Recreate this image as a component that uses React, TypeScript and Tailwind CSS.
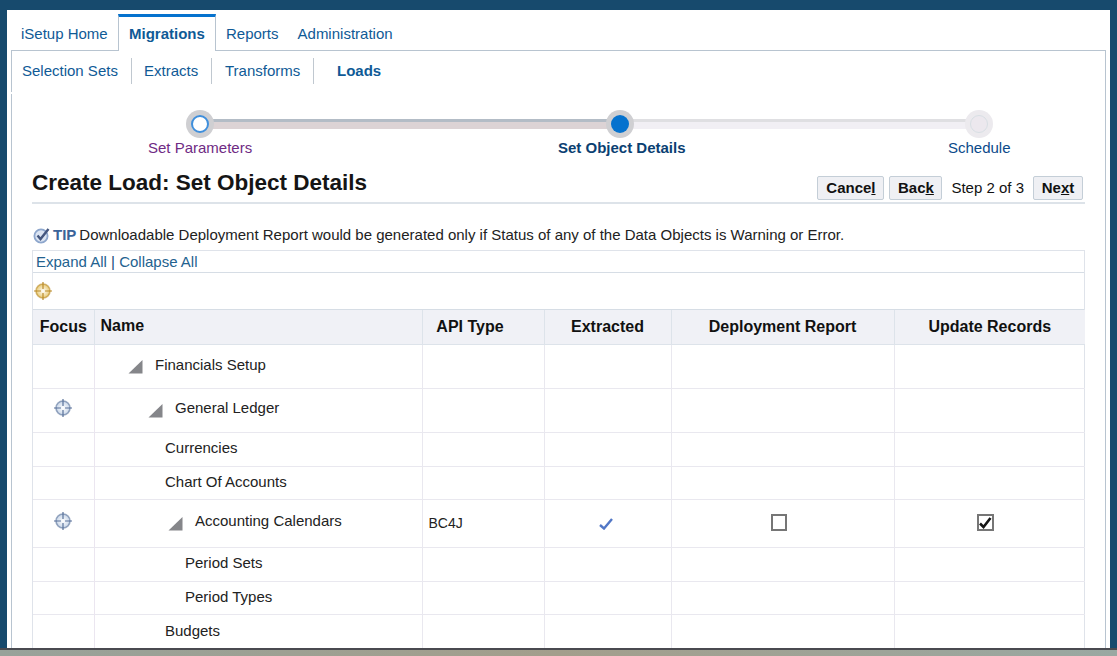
import React from 'react';

const Target = ({ color, line }: { color: string; line: string }) => (
  <svg width="20" height="20" viewBox="0 0 20 20">
    <defs>
      <radialGradient id={`t${color.slice(1)}`} cx="50%" cy="50%" r="55%">
        <stop offset="0%" stopColor="#ffffff" />
        <stop offset="100%" stopColor={color} />
      </radialGradient>
    </defs>
    <circle cx="10" cy="10" r="7" fill={`url(#t${color.slice(1)})`} stroke={line} strokeOpacity="0.6" strokeWidth="1.6" />
    <path d="M10 1v7M10 12v7M1 10h7M12 10h7" stroke={line} strokeWidth="1.2" />
  </svg>
);

const Arrow = () => (
  <svg width="15" height="15" viewBox="0 0 15 15" className="shrink-0">
    <path d="M14.5 1v13.5H0.5z" fill="#85868a" />
  </svg>
);

type Row = { name: string; indent: number; h: string; lift: string; arrow?: boolean; focus?: boolean; api?: string; check?: boolean };

const rows: Row[] = [
  { name: 'Financials Setup', indent: 33.5, h: 'h-[44px]', lift: 'mb-[1px]', arrow: true },
  { name: 'General Ledger', indent: 53.5, h: 'h-[44px]', lift: 'mb-[3px]', arrow: true, focus: true },
  { name: 'Currencies', indent: 70.5, h: 'h-[34px]', lift: 'mb-[1px]' },
  { name: 'Chart Of Accounts', indent: 70.5, h: 'h-[33px]', lift: 'mb-0' },
  { name: 'Accounting Calendars', indent: 73.5, h: 'h-[48px]', lift: 'mb-[4px]', arrow: true, focus: true, api: 'BC4J', check: true },
  { name: 'Period Sets', indent: 90.5, h: 'h-[34px]', lift: 'mb-[1px]' },
  { name: 'Period Types', indent: 90.5, h: 'h-[33px]', lift: 'mb-0' },
  { name: 'Budgets', indent: 70.5, h: 'h-[34px]', lift: 'mb-0' },
];

const Step = ({ dot }: { dot: 'ring' | 'fill' | 'off' }) => (
  <div
    className={`w-[28px] h-[28px] rounded-full flex items-center justify-center ${
      dot === 'off' ? 'bg-[#eceaee]' : 'bg-[#cfcfd2]'
    }`}
  >
    {dot === 'ring' && <div className="w-[18px] h-[18px] rounded-full bg-white border-2 border-[#3f8fdc]" />}
    {dot === 'fill' && <div className="w-[18px] h-[18px] rounded-full bg-[#0572ce]" />}
    {dot === 'off' && <div className="w-[18px] h-[18px] rounded-full bg-[#ece8ee] border border-[#d8dfe4]" />}
  </div>
);

const Btn = ({ pre, u, post, w }: { pre: string; u: string; post?: string; w: string }) => (
  <button className={`${w} h-[24px] rounded-[2px] border border-[#c4ced7] bg-[#eff0f4] text-[15px] font-bold text-[#111]`}>
    {pre}
    <span className="underline">{u}</span>
    {post}
  </button>
);

export default function App() {
  return (
    <div
      className="h-screen w-full flex flex-col overflow-hidden bg-[#174a6d] text-[#222]"
      style={{ fontFamily: '"Liberation Sans", Arial, sans-serif' }}
    >
      <div className="flex-1 min-h-0 mt-[10px] mx-[7px] bg-white overflow-hidden">
        {/* main tabs */}
        <div className="flex h-[41px] pt-[4px] pl-[4px] relative">
          <div className="absolute left-[4px] right-[4px] bottom-0 h-px bg-[#b8c4d0]" />
          <div className="w-[107px] pl-[10px] pt-[9px] text-[15px] text-[#0f5a96]">iSetup Home</div>
          <div className="relative z-10 w-[98px] h-[37px] bg-white border-x border-[#b8c4d0] border-t-[3px] border-t-[#0572ce] pl-[10px] pt-[6px] text-[15px] font-bold text-[#0f5a96]">
            Migrations
          </div>
          <div className="pl-[10px] pt-[9px] text-[15px] text-[#0f5a96]">Reports</div>
          <div className="pl-[19px] pt-[9px] text-[15px] text-[#0f5a96]">Administration</div>
        </div>

        <div className="mx-[4px] h-full border-x border-[#b8c4d0]">
          {/* sub tabs */}
          <div className="flex items-center h-[41px] text-[15px] text-[#0f5a96] pb-[1px]">
            <div className="pl-[10px] w-[120px] h-[26px] leading-[26px] border-r border-[#c0c8d0]">Selection Sets</div>
            <div className="pl-[12px] w-[80px] h-[26px] leading-[26px] border-r border-[#c0c8d0]">Extracts</div>
            <div className="pl-[13px] w-[102px] h-[26px] leading-[26px] border-r border-[#c0c8d0]">Transforms</div>
            <div className="pl-[23px] font-bold">Loads</div>
          </div>
          <div className="-ml-px w-px h-[2px] bg-white" />

          {/* train */}
          <div className="relative h-[67px] ml-[21px] mr-[20px]">
            <div className="absolute left-[167px] right-[105px] top-[25px] h-[10px] flex">
              <div className="w-[420px] bg-[#dcd3d5] border-t-[3px] border-[#b3bcc6]" />
              <div className="flex-1 bg-[#f1eff4] border-t-[3px] border-[#dfdfe2]" />
            </div>
            <div className="absolute left-[153px] top-[16px]"><Step dot="ring" /></div>
            <div className="absolute left-[573px] top-[16px]"><Step dot="fill" /></div>
            <div className="absolute left-[932px] top-[16px]"><Step dot="off" /></div>
            <div className="absolute left-[115px] top-[43px] text-[15px] text-[#6f2b84] whitespace-nowrap">Set Parameters</div>
            <div className="absolute left-[525px] top-[43px] text-[15px] font-bold text-[#0b3f72] whitespace-nowrap">Set Object Details</div>
            <div className="absolute left-[915px] top-[43px] text-[15px] text-[#0b4a8a] whitespace-nowrap">Schedule</div>
          </div>

          <div className="ml-[20px] mr-[19px] w-[1053px]">
            {/* title */}
            <div className="flex items-center justify-between h-[43px] border-b-2 border-[#dde3e9] pb-[1px]">
              <h1 className="text-[22.5px] font-bold text-[#151515] pt-[4px]">Create Load: Set Object Details</h1>
              <div className="flex items-center mr-[2px] mt-[14px]">
                <Btn pre="Cance" u="l" w="w-[67px]" />
                <div className="w-[5px]" />
                <Btn pre="Bac" u="k" w="w-[53px]" />
                <span className="text-[15px] text-[#111] mx-[9px]">Step 2 of 3</span>
                <Btn pre="Ne" u="x" post="t" w="w-[50px]" />
              </div>
            </div>

            {/* tip */}
            <div className="flex items-center h-[46px] pt-[16px] text-[15px] text-[#222]">
              <svg width="18" height="18" viewBox="0 0 18 18" className="ml-[1px] mr-[2px]">
                <circle cx="8" cy="10" r="6.6" fill="#dbe4f2" stroke="#8da6cc" strokeWidth="1.8" />
                <path d="M4.5 9.5l3 3.5L15.5 3" fill="none" stroke="#44567e" strokeWidth="2.4" />
              </svg>
              <span className="font-bold text-[#3a6399] mr-[3px]">TIP</span>
              <span>Downloadable Deployment Report would be generated only if Status of any of the Data Objects is Warning or Error.</span>
            </div>

            {/* table box */}
            <div className="border-x border-t border-[#dfe3ea]">
              <div className="h-[22px] border-b border-[#d6dde5] pl-[3px] text-[15px] leading-[21px] text-[#23628f]">
                Expand All <span className="text-[#174a7c]">|</span> Collapse All
              </div>
              <div className="h-[37px] border-b border-[#d6dde5] pt-[8px]">
                <Target color="#e6c466" line="#b98a28" />
              </div>
              <table className="w-[1052px] table-fixed border-collapse text-[15px]">
                <colgroup>
                  <col className="w-[61px]" />
                  <col className="w-[328px]" />
                  <col className="w-[122px]" />
                  <col className="w-[127px]" />
                  <col className="w-[223px]" />
                  <col className="w-[191px]" />
                </colgroup>
                <thead>
                  <tr className="h-[34px] bg-[#f0f1f6] text-[16px] font-bold text-[#111]">
                    <th className="border-r border-b border-[#dde3ea] text-center font-bold">Focus</th>
                    <th className="border-r border-b border-[#dde3ea] text-left pl-[6px] pb-[1px] font-bold">Name</th>
                    <th className="border-r border-b border-[#dde3ea] text-center pr-[26px] font-bold">API Type</th>
                    <th className="border-r border-b border-[#dde3ea] text-center font-bold">Extracted</th>
                    <th className="border-r border-b border-[#dde3ea] text-center font-bold">Deployment Report</th>
                    <th className="border-b border-[#dde3ea] text-center font-bold">Update Records</th>
                  </tr>
                </thead>
                <tbody>
                  {rows.map((r) => (
                    <tr key={r.name} className={`${r.h} border-b border-[#e9e8ef]`}>
                      <td className="border-r border-[#ebe6f0] text-center align-middle">
                        {r.focus && (
                          <span className="inline-block align-middle mb-[5px]">
                            <Target color="#c3d2e6" line="#587199" />
                          </span>
                        )}
                      </td>
                      <td className="border-r border-[#e9e8ef]">
                        <div className="flex items-center" style={{ paddingLeft: r.indent }}>
                          {r.arrow && <Arrow />}
                          <span className={`${r.arrow ? 'ml-[12px]' : ''} ${r.lift} text-[#222]`}>{r.name}</span>
                        </div>
                      </td>
                      <td className="border-r border-[#e9e8ef] pl-[6px] text-[14px]">{r.api}</td>
                      <td className="border-r border-[#e9e8ef] text-center">
                        {r.check && (
                          <svg width="14" height="12" viewBox="0 0 14 12" className="inline-block -ml-[3px]">
                            <path d="M1 7l4 3.5L13 1" fill="none" stroke="#5277c6" strokeWidth="2.4" />
                          </svg>
                        )}
                      </td>
                      <td className="border-r border-[#e9e8ef] text-center">
                        {r.check && <span className="inline-block w-[16px] h-[17px] border-[2px] border-[#767676] bg-white mr-[8px] mb-[2px] align-middle" />}
                      </td>
                      <td className="text-center">
                        {r.check && (
                          <span className="inline-flex items-center justify-center w-[17px] h-[17px] border-[2px] border-[#767676] bg-white mr-[9px] mb-[2px] align-middle">
                            <svg width="13" height="12" viewBox="0 0 13 12">
                              <path d="M1 6.5l3.5 3.5L11.5 1" fill="none" stroke="#151515" strokeWidth="2.6" />
                            </svg>
                          </span>
                        )}
                      </td>
                    </tr>
                  ))}
                </tbody>
              </table>
            </div>
          </div>
        </div>
      </div>
      <div className="h-[8px] shrink-0 border-t-2 border-[#4a4a50] bg-gradient-to-r from-[#98a29a] via-[#a39e8c] to-[#9aa8a2]" />
    </div>
  );
}
